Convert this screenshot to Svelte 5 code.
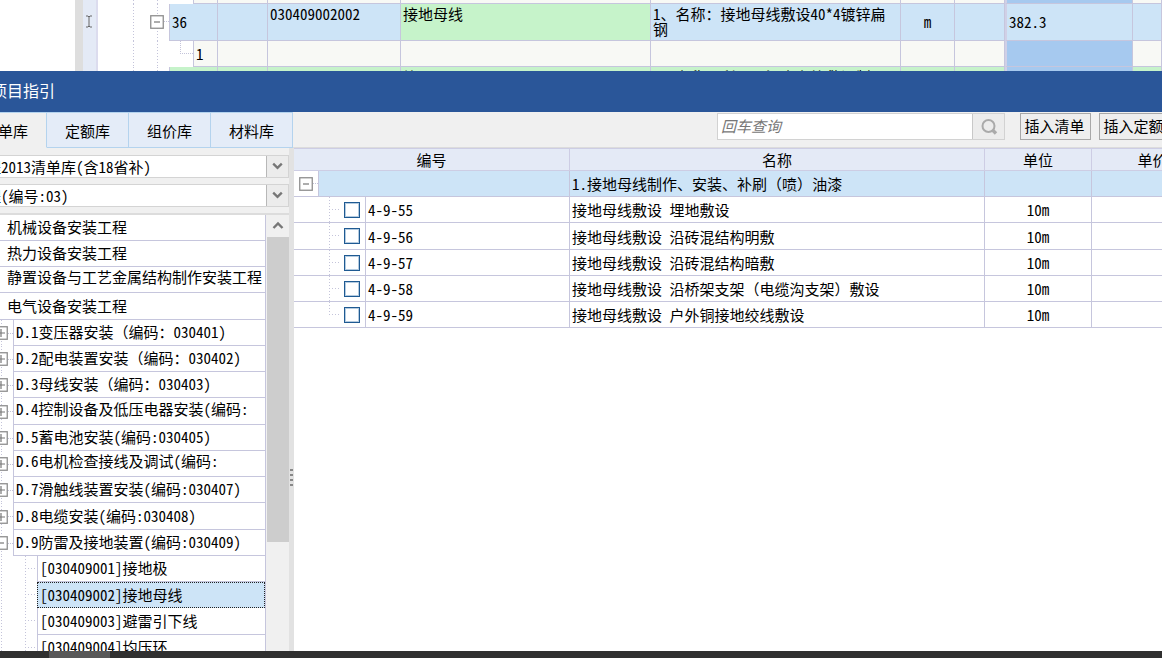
<script>
  const tabs = ['清单库', '定额库', '组价库', '材料库'];
  let active = $state('清单库');

  const tree = [
    { level: 1, text: '机械设备安装工程' },
    { level: 1, text: '热力设备安装工程' },
    { level: 1, text: '静置设备与工艺金属结构制作安装工程', high: true },
    { level: 1, text: '电气设备安装工程' },
    { level: 2, text: 'D.1变压器安装（编码：030401)' },
    { level: 2, text: 'D.2配电装置安装（编码：030402)' },
    { level: 2, text: 'D.3母线安装（编码：030403)' },
    { level: 2, text: 'D.4控制设备及低压电器安装(编码:', high: true },
    { level: 2, text: 'D.5蓄电池安装(编码:030405)' },
    { level: 2, text: 'D.6电机检查接线及调试(编码:', high: true },
    { level: 2, text: 'D.7滑触线装置安装(编码:030407)' },
    { level: 2, text: 'D.8电缆安装(编码:030408)' },
    { level: 2, text: 'D.9防雷及接地装置(编码:030409)', open: true },
    { level: 3, text: '[030409001]接地极' },
    { level: 3, text: '[030409002]接地母线', selected: true },
    { level: 3, text: '[030409003]避雷引下线' },
    { level: 3, text: '[030409004]均压环' }
  ];

  const norms = [
    { code: '4-9-55', name: '接地母线敷设 埋地敷设', unit: '10m' },
    { code: '4-9-56', name: '接地母线敷设 沿砖混结构明敷', unit: '10m' },
    { code: '4-9-57', name: '接地母线敷设 沿砖混结构暗敷', unit: '10m' },
    { code: '4-9-58', name: '接地母线敷设 沿桥架支架（电缆沟支架）敷设', unit: '10m' },
    { code: '4-9-59', name: '接地母线敷设 户外铜接地绞线敷设', unit: '10m' }
  ];

  // Full-width brackets and colons keep their own width beside half-width Latin text.
  const parts = (text) => text.split(/([（）：、])/).filter(Boolean);
</script>

{#snippet mixed(text)}{#each parts(text) as part}{#if /[（）：、]/.test(part)}<span class="full">{part}</span>{:else}{part}{/if}{/each}{/snippet}

{#snippet toggle(open)}
  <button class="toggle" aria-label={open ? '折叠' : '展开'}>
    <svg width="14" height="14" viewBox="0 0 14 14">
      <rect x="0.75" y="0.75" width="12.5" height="12.5" fill="#fff" stroke="#8e8e8e" stroke-width="1.3" />
      <path d={open ? 'M4 7H10' : 'M3 7H11M7 3V11'} stroke="#777" stroke-width="1.2" />
    </svg>
  </button>
{/snippet}

<div class="app">
  <div class="sheet">
    <div class="margin"></div>
    <div class="strip"></div>
    <div class="marks">
      <svg width="8" height="13" viewBox="0 0 8 13"><path d="M1 1H3L4 2L5 1H7M4 2V11M1 12H3L4 11L5 12H7" fill="none" stroke="#666" /></svg>
    </div>
    <table class="items">
      <colgroup>
        <col class="c-tree" /><col class="c-kind" /><col class="c-code" /><col class="c-name" /><col class="c-name" />
        <col class="c-unit" /><col class="c-kind" /><col class="c-qty" /><col />
      </colgroup>
      <tbody>
        <tr class="edge plain">
          <td class="tree"><div class="branch child"><i></i></div></td>
          <td></td><td></td><td></td><td></td><td></td><td></td><td class="qty"></td><td></td>
        </tr>
        <tr class="current">
          <td class="tree">
            <div class="branch top">
              {@render toggle(true)}
              <span class="stub"></span>
              <i>36</i>
            </div>
          </td>
          <td></td>
          <td>030409002002</td>
          <td class="green">接地母线</td>
          <td>{@render mixed('1、名称：接地母线敷设40*4镀锌扁钢')}</td>
          <td class="mid">m</td>
          <td></td>
          <td class="qty val">382.3</td>
          <td></td>
        </tr>
        <tr class="plain sub">
          <td class="tree"><div class="branch child"><span class="elbow"></span><i>1</i></div></td>
          <td></td><td></td><td></td><td></td><td></td><td></td><td class="qty"></td><td></td>
        </tr>
        <tr class="next">
          <td class="tree"><div class="branch top"><i></i></div></td>
          <td></td><td></td><td>均压环</td><td>{@render mixed('1、名称：利用圈梁内主筋敷设制')}</td><td></td><td></td><td class="qty"></td><td></td>
        </tr>
      </tbody>
    </table>
  </div>

  <section class="dialog">
    <header>查询项目指引</header>
    <div class="bar">
      <nav>
        {#each tabs as tab}
          <button class="tab" class:on={tab === active} onclick={() => (active = tab)}>{tab}</button>
        {/each}
      </nav>
      <form class="tools" onsubmit={(e) => e.preventDefault()}>
        <div class="search">
          <input type="text" aria-label="查询" placeholder="回车查询" />
          <button class="find" aria-label="搜索">
            <svg width="22" height="22" viewBox="0 0 22 22"><circle cx="10.5" cy="10" r="6" fill="none" stroke="#aaa" stroke-width="2" /><path d="M14.5 14L18 17.5" stroke="#aaa" stroke-width="3.4" /></svg>
          </button>
        </div>
        <button class="cmd" type="button">插入清单</button>
        <button class="cmd" type="button">插入定额</button>
      </form>
    </div>

    <div class="body">
      <aside>
        <div class="combo">
          <select aria-label="清单库"><option>建设工程2013清单库(含18省补)</option></select>
          <svg width="22" height="21" viewBox="0 0 22 21"><path d="M6.5 7.5L11 12L15.5 7.5" fill="none" stroke="#777" stroke-width="2.4" /></svg>
        </div>
        <div class="combo">
          <select aria-label="专业"><option>安装工程(编号:03)</option></select>
          <svg width="22" height="21" viewBox="0 0 22 21"><path d="M6.5 7.5L11 12L15.5 7.5" fill="none" stroke="#777" stroke-width="2.4" /></svg>
        </div>
        <div class="listbox">
          <ul>
            {#each tree as node}
              <li class="l{node.level}" class:high={node.high} class:selected={node.selected}>
                {#if node.level === 2}{@render toggle(node.open)}<span class="stub"></span>{/if}
                {#if node.level === 3}<span class="twig"></span>{/if}
                <span class="label">{@render mixed(node.text)}</span>
              </li>
            {/each}
          </ul>
          <div class="scroll">
            <button aria-label="向上滚动"><svg width="22" height="22" viewBox="0 0 22 22"><path d="M6.5 13L11 8.5L15.5 13" fill="none" stroke="#777" stroke-width="2.4" /></svg></button>
            <div class="thumb"></div>
          </div>
        </div>
      </aside>
      <div class="splitter"><b></b><b></b><b></b><b></b></div>
      <main>
        <table class="norms">
          <colgroup><col class="n-code" /><col /><col class="n-unit" /><col class="n-price" /></colgroup>
          <thead><tr><th>编号</th><th>名称</th><th>单位</th><th>单价</th></tr></thead>
          <tbody>
            <tr class="group">
              <td class="key"><div class="node">{@render toggle(true)}<span class="stub"></span><span class="fill"></span></div></td>
              <td>{@render mixed('1.接地母线制作、安装、补刷（喷）油漆')}</td>
              <td></td><td></td>
            </tr>
            {#each norms as norm, n}
              <tr>
                <td class="key">
                  <div class="leaf">
                    <span class="lead" class:last={n === norms.length - 1}></span>
                    <input type="checkbox" id="n{n}" />
                    <label for="n{n}">{norm.code}</label>
                  </div>
                </td>
                <td>{@render mixed(norm.name)}</td>
                <td class="mid">{norm.unit}</td>
                <td></td>
              </tr>
            {/each}
          </tbody>
        </table>
      </main>
    </div>
  </section>
  <footer><span></span></footer>
</div>

<style>
  :global(body) { background: #fff; overflow: hidden; }
  .app, .app :is(button, input, select) {
    font-family: "Noto Sans CJK SC", sans-serif;
    font-size: 15px;
    font-feature-settings: "hwid";
    color: #000;
  }
  .app { display: flex; flex-direction: column; height: 100vh; overflow: hidden; line-height: 15px; }
  .app * { box-sizing: border-box; }
  button { padding: 0; margin: 0; border: 0; background: none; }
  svg { display: block; flex: none; }
  .full { font-feature-settings: normal; }
  table { border-collapse: separate; border-spacing: 0; table-layout: fixed; width: 100%; }
  td { padding: 0 2px; border: solid #c6c6dd; border-width: 0 1px 1px 0; overflow: hidden; white-space: nowrap; }

  .sheet { display: flex; flex: none; height: 71px; overflow: hidden; }
  .margin { flex: none; width: 75px; }
  .strip { flex: none; width: 8px; background: #dedede; }
  .marks { flex: none; width: 15px; padding: 15px 0 0 2px; background: #e4eaf6; border-right: 2px solid #dcdcee; }
  .items { flex: 1; width: 0; }
  .c-tree { width: 120px; }
  .c-kind { width: 50px; }
  .c-code { width: 133px; }
  .c-name { width: 250px; }
  .c-unit { width: 54px; }
  .c-qty { width: 128px; }
  .items td { height: 26px; vertical-align: top; padding-top: 2px; white-space: normal; background: #f8f9f5; }
  .items .edge td { height: 4px; padding: 0; }
  .items .current td { height: 37px; background: #cde4f7; }
  .items .current .green, .items .next td { background: #c6f3ca; }
  .items td.qty { background: #a6c9ef; border-left: 2px solid #d0d0e6; }
  .items .current .val { background: #cde4f7; vertical-align: middle; padding-bottom: 4px; }
  .items .current .mid { vertical-align: middle; text-align: center; padding-bottom: 4px; }
  .items td.tree, .items .edge td.tree, .items .current td.tree, .items .next td.tree { padding: 0; background: #fff; border-bottom: 0; }
  .branch { display: flex; align-items: center; height: 26px; background: repeating-linear-gradient(#c4c4da 0 1px, #fff 1px 3px) 35px 0 / 1px 100% no-repeat, repeating-linear-gradient(#c4c4da 0 1px, #fff 1px 3px) 59px 0 / 1px 100% no-repeat; }
  .edge .branch { height: 4px; }
  .current .branch { height: 37px; }
  .branch i { flex: 1; align-self: stretch; display: flex; align-items: center; padding-left: 2px; font-style: normal; border: solid #c6c6dd; border-width: 0 0 1px 1px; background: #f8f9f5; }
  .current .branch i { padding-bottom: 2px; background: #cde4f7; }
  .current .toggle, .current .stub { margin-bottom: 2px; }
  .next .branch i { background: #c6f3ca; }
  .branch.top { padding-left: 52px; }
  .next .branch.top { padding-left: 71px; }
  .branch.child { padding-left: 82px; }
  .edge .branch.child { padding-left: 95px; }
  .elbow { width: 13px; height: 13px; align-self: flex-start; border: dotted #c4c4da; border-width: 0 0 1px 1px; }

  .toggle { flex: none; width: 14px; height: 14px; }
  .stub { flex: none; width: 5px; border-top: 1px dotted #c4c4da; }

  .dialog { flex: 1; min-height: 0; margin: 0 -52px 0 -70px; display: flex; flex-direction: column; background: #f0f0f0; }
  header { flex: none; height: 41px; padding-left: 29px; font-size: 16px; line-height: 39px; background: #2a5699; color: #fff; }
  .bar { flex: none; display: flex; justify-content: space-between; height: 36px; border-bottom: 1px solid #dcdcdc; }
  nav { display: flex; }
  .tab { width: 82px; height: 36px; background: #e4ecf8; border: solid #b4d3ee; border-width: 1px 1px 1px 0; }
  .tab:first-child { width: 117px; padding-left: 35px; }
  .tab.on { background: #f0f0f0; border-bottom-color: #f0f0f0; }
  .tools { display: flex; align-items: flex-start; gap: 8px; padding: 1px 44px 0 0; }
  .search { display: flex; width: 288px; height: 27px; margin-right: 7px; border: 1px solid #d2d2d2; background: #fff; }
  .search input { flex: 1; min-width: 0; border: 0; padding: 0 3px 2px; background: none; outline: 0; }
  .search input::placeholder { color: #777; font-style: italic; opacity: 1; }
  .find { display: grid; place-items: center; width: 32px; border-left: 1px solid #c8c8c8; background: #ececec; }
  .cmd { width: 71px; height: 27px; padding: 0 2px 2px 0; border: 1px solid #a8a8a8; background: #eee; white-space: nowrap; }

  .body { flex: 1; min-height: 0; display: flex; }
  aside { flex: none; width: 359px; display: flex; flex-direction: column; gap: 6px; padding-top: 7px; }
  .combo { flex: none; display: flex; height: 23px; border: 1px solid #d4d4d4; background: #fff; }
  .combo select { flex: 1; min-width: 0; appearance: none; border: 0; padding: 0 0 0 10px; background: #fff; }
  .combo svg { border-left: 1px solid #b8b8b8; background: #ececec; }
  .listbox { flex: 1; min-height: 0; display: flex; overflow: hidden; background: #fff; border-top: 2px solid #dcdcdc; }
  ul { flex: 1; min-width: 0; margin: 0; padding: 0; list-style: none; border-right: 1px solid #c6c6dd; }
  li { display: flex; align-items: center; height: 26px; white-space: nowrap; }
  li:nth-child(4n) { height: 27px; }
  .label { flex: 1; align-self: stretch; display: flex; align-items: center; padding: 0 0 2px 2px; border-bottom: 1px solid #c6c6dd; }
  .l1 .label { padding-left: 77px; }
  .high .label { padding-bottom: 6px; }
  .l2 { padding-left: 64px; }
  .l2, .l3 { background: repeating-linear-gradient(#c4c4da 0 1px, #fff 1px 3px) 71px 0 / 1px 100% no-repeat; }
  .l2 .label, .l3 .label { border-left: 1px solid #c6c6dd; }
  .l3 { padding-left: 95px; }
  .twig { flex: none; align-self: stretch; width: 12px; background: repeating-linear-gradient(90deg, #c4c4da 0 1px, #fff 1px 3px) 0 12px / 100% 1px no-repeat, repeating-linear-gradient(#c4c4da 0 1px, #fff 1px 3px) 0 0 / 1px 100% no-repeat; }
  .selected .label { background: #cde4f7; border: 1px dotted #222; }
  .scroll { flex: none; width: 23px; padding-left: 1px; display: flex; flex-direction: column; background: #f0f0f0; }
  .scroll button { flex: none; height: 22px; }
  .thumb { flex: none; height: 70%; background: #cdcdcd; }
  .splitter { flex: none; width: 5px; display: flex; flex-direction: column; align-items: center; justify-content: center; gap: 3px; padding-top: 156px; background: #e2e2e2; }
  .splitter b { width: 3px; height: 2px; background: #888; }

  main { flex: 1; min-width: 0; background: #fff; }
  .n-code { width: 276px; }
  .n-unit { width: 107px; }
  .n-price { width: 122px; }
  th { height: 23px; padding: 0 0 1px; font-weight: 400; background: #e4eaf6; border: solid #cdcde4; border-width: 1px 1px 1px 0; }
  .norms td { height: 26px; }
  .norms tr:nth-child(4n + 3) td { height: 27px; }
  .norms .mid { text-align: center; }
  .norms td.key { padding: 0; }
  .group td { background: #cde4f7; }
  .node, .leaf { display: flex; align-items: center; height: 25px; background: #fff; }
  .norms tr:nth-child(4n + 3) .leaf { height: 26px; }
  .node { padding-left: 5px; }
  .fill { flex: 1; align-self: stretch; background: #cde4f7; border-left: 1px solid #c6c6dd; }
  .leaf { padding-left: 35px; }
  .lead { flex: none; align-self: stretch; width: 12px; margin-right: 3px; background: repeating-linear-gradient(90deg, #c4c4da 0 1px, #fff 1px 3px) 0 12px / 100% 1px no-repeat, repeating-linear-gradient(#c4c4da 0 1px, #fff 1px 3px) 0 0 / 1px 100% no-repeat; }
  .lead.last { background-size: 100% 1px, 1px 12px; }
  .leaf input { flex: none; appearance: none; width: 16px; height: 16px; margin: 0 5px 0 0; border: 1px solid #1f5a92; box-shadow: inset 0 0 0 1px #b4cbe0; background: #fff; }
  .leaf input:checked { background: #2d6397; }
  .leaf label { flex: 1; align-self: stretch; display: flex; align-items: center; padding-left: 2px; border-left: 1px solid #c6c6dd; }

  footer { flex: none; height: 7px; padding-left: 49px; background: #303030; }
  footer span { display: block; width: 61px; height: 7px; background: #585858; }
</style>
